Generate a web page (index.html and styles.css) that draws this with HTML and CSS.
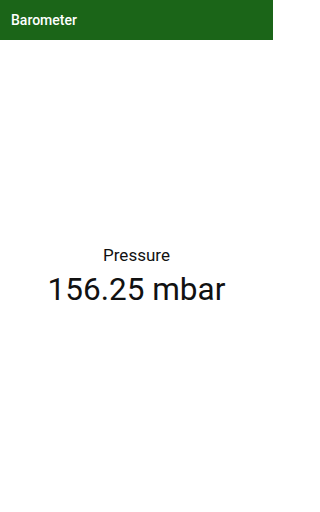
FILE: index.html
```
<!DOCTYPE html>
<html>
<head>
<meta charset="utf-8">
<link rel="stylesheet" href="styles.css">
</head>
<body>
<div class="app">
  <header class="bar"><span class="title">Barometer</span></header>
  <main class="content">
    <div class="label">Pressure</div>
    <div class="value">156.25 mbar</div>
  </main>
</div>
</body>
</html>
```
FILE: styles.css
```
html, body {
  margin: 0;
  padding: 0;
  background: #ffffff;
  font-family: Roboto, "Noto Sans", sans-serif;
}
.app {
  width: 273px;
  height: 512px;
  display: flex;
  flex-direction: column;
}
.bar {
  height: 40px;
  flex: none;
  background: #1b6518;
  display: flex;
  align-items: center;
  padding-left: 11px;
  box-sizing: border-box;
}
.title {
  color: #ffffff;
  font-size: 14px;
  font-weight: 500;
}
.content {
  flex: 1;
  display: flex;
  flex-direction: column;
  align-items: center;
  justify-content: center;
  color: #111111;
}
.label {
  font-size: 17px;
  line-height: 22px;
}
.value {
  font-size: 31.5px;
  line-height: 38px;
  margin-top: 5px;
}
```
